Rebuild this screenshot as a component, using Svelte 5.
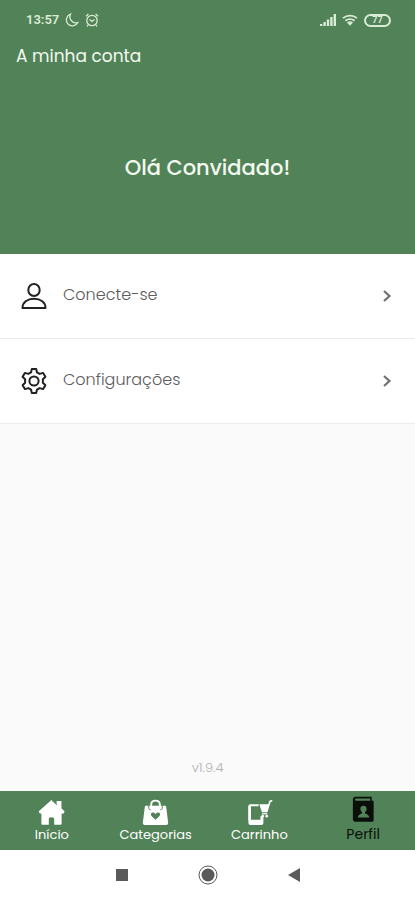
<script>
    const title = 'A minha conta';
    const version = 'v1.9.4';

    const menu = [
        { id: 'login', label: 'Conecte-se', href: '#login' },
        { id: 'settings', label: 'Configurações', href: '#settings' }
    ];

    const tabs = [
        { id: 'home', label: 'Início', href: '#home' },
        { id: 'categories', label: 'Categorias', href: '#categories' },
        { id: 'cart', label: 'Carrinho', href: '#cart' },
        { id: 'profile', label: 'Perfil', href: '#profile' }
    ];

    let active = $state('profile');
</script>

<div class="screen">
    <div class="status">
        <div class="status-group">
            <span class="clock">13:57</span>
            <svg class="status-icon" viewBox="0 0 14 14" aria-hidden="true">
                <path d="M5.5 1.2a6 6 0 1 0 7.3 8.3A6 6 0 0 1 5.5 1.2Z" />
            </svg>
            <svg class="status-icon" viewBox="0 0 14 14" aria-hidden="true">
                <circle cx="7" cy="7.5" r="5.2" />
                <path d="M1 3.2 3.4 1M13 3.2 10.6 1M4.5 6.5l2.500 2 2.500-2M3 12l-1 1.300M11 12l1 1.300" />
            </svg>
        </div>
        <div class="status-group right">
            <svg class="signal" viewBox="0 0 16 12" aria-hidden="true">
                <path d="M0 12v-2h2.400v2zM3.400 12V8h2.400v4zM6.800 12V5.500h2.400V12zM10.200 12V3h2.400v9zM13.600 12V0H16v12z" />
            </svg>
            <svg class="wifi" viewBox="0 0 16 12" aria-hidden="true">
                <path d="M1 4.200a10.500 10.500 0 0 1 14 0M3.400 6.800a7 7 0 0 1 9.200 0" />
                <path class="dot" d="M5 8.600a4.600 4.600 0 0 1 6 0L8 11.800Z" />
            </svg>
            <span class="battery">77</span>
        </div>
    </div>

    <header class="topbar">
        <h1>{title}</h1>
    </header>

    <section class="hero">
        <h2>Olá Convidado!</h2>
    </section>

    <main>
        <nav class="menu" aria-label={title}>
            {#each menu as item}
                <a class="menu-item" href={item.href}>
                    <svg class="menu-icon" viewBox="0 0 26 28" aria-hidden="true">
                        {#if item.id === 'login'}
                            <ellipse cx="13" cy="8" rx="5.7" ry="6" />
                            <path d="M1.500 26c0-5.600 4.700-9.200 11.500-9.200S24.500 20.400 24.500 26Z" />
                        {:else}
                            <path d="M10.800 2h4.400l.8 3.400 2.700 1.500 3.400-1 2.300 3.900-2.500 2.500v3.400l2.500 2.500-2.300 3.900-3.400-1-2.700 1.500-.8 3.400h-4.400l-.8-3.400-2.700-1.500-3.400 1-2.300-3.900 2.500-2.500v-3.400L1.600 9.800l2.300-3.900 3.400 1L10 5.400Z" />
                            <circle cx="13" cy="14" r="4.600" />
                        {/if}
                    </svg>
                    <span class="menu-label">{item.label}</span>
                    <svg class="chevron" viewBox="0 0 10 14" aria-hidden="true">
                        <path d="m2 2 5.500 5L2 12" />
                    </svg>
                </a>
            {/each}
        </nav>

        <p class="version">{version}</p>
    </main>

    <nav class="tabs" aria-label="Principal">
        {#each tabs as tab}
            <a
                class="tab"
                class:active={active === tab.id}
                href={tab.href}
                aria-current={active === tab.id ? 'page' : undefined}
                onclick={() => (active = tab.id)}
            >
                <svg viewBox="0 0 28 28" aria-hidden="true">
                    {#if tab.id === 'home'}
                        <path d="M14 1 .8 12.700l1 2.300H3.500v10.500c0 .8.500 1.300 1.300 1.300h6.400v-6c0-1.200.8-2 2.800-2s2.800.8 2.800 2v6h6.400c.8 0 1.300-.5 1.300-1.300V15h2.300l.7-2.300-3.200-3V2h-5v3.500l-2-2Z" />
                        <path class="cut" d="m14.500 1.500 5 4.500" />
                    {:else if tab.id === 'categories'}
                        <path fill-rule="evenodd" d="M4.500 7h19c.9 0 1.500.5 1.600 1.300l2 16c.2 1.500-.8 2.700-2.300 2.700H3.200C1.700 27 .7 25.800.9 24.300l2-16C3 7.500 3.600 7 4.500 7ZM14 21.500l4.200-3.900c1.200-1.300.4-3.500-1.500-3.500-1.200 0-2.100.6-2.700 1.700-.6-1.100-1.500-1.700-2.700-1.700-1.900 0-2.700 2.200-1.500 3.500Z" />
                        <path class="handle" d="M9.500 9V6c0-2.700 1.700-4.300 4.500-4.300s4.500 1.600 4.500 4.300v3" />
                        <path class="cut" d="M7 6.500v3c0 1 .8 1.700 2 1.700M21 6.500v3c0 1-.8 1.700-2 1.700" />
                    {:else if tab.id === 'cart'}
                        <path d="M5 5.500h8v2H5v14h10V18h3v7c0 1.200-.8 2-2 2H5c-1.500 0-2.500-1-2.500-2.500V8c0-1.500 1-2.500 2.500-2.500Z" />
                        <path d="M5 5.500c-1.500 0-2.500 1-2.500 2.500v14H5Z" />
                        <path d="M13.800 5.500H23l1.200-3.600 2.800-1 .5 1.500-1.900.8-3.400 10.500H16.500Z" />
                        <path d="M16.500 14.700H22V16h-5.500Z" />
                        <circle cx="17.300" cy="17.800" r="1.400" />
                        <circle cx="21.500" cy="17.800" r="1.400" />
                    {:else}
                        <path fill-rule="evenodd" d="M6 .8h16.500v4h2v20c0 1.200-.8 2-2 2H6c-1.700 0-3-1.300-3-3v-20c0-1.700 1.300-3 3-3ZM6 2.500c-1.100 0-1.100 2.300 0 2.300h15V2.500ZM14 10c-2 0-3.200 1.300-3.200 3.200 0 1.500.6 2.700 1.600 3.400v1.500c-2.500.7-4 1.800-4.400 4.200h12c-.4-2.400-1.900-3.500-4.400-4.200v-1.500c1-.7 1.600-1.900 1.600-3.400 0-1.900-1.200-3.200-3.200-3.200Z" />
                    {/if}
                </svg>
                <span>{tab.label}</span>
            </a>
        {/each}
    </nav>

    <div class="system">
        <button aria-label="Recentes">
            <svg viewBox="0 0 20 20" aria-hidden="true"><rect x="4" y="4" width="12" height="12" /></svg>
        </button>
        <button aria-label="Ecrã inicial">
            <svg viewBox="0 0 20 20" aria-hidden="true">
                <circle cx="10" cy="10" r="6.500" />
                <circle class="ring" cx="10" cy="10" r="9" />
            </svg>
        </button>
        <button aria-label="Voltar">
            <svg viewBox="0 0 20 20" aria-hidden="true"><path d="M4 10 16 3v14Z" /></svg>
        </button>
    </div>
</div>

<style>
    :global(body) {
        margin: 0;
        background: #fafafa;
    }

    .screen {
        --green: #528257;
        --light: #f3faf1;
        display: flex;
        flex-direction: column;
        min-height: 100vh;
        font-family: Poppins, Inter, "Open Sans", sans-serif;
        color: #5c5c5c;
    }

    svg {
        display: block;
        flex: none;
    }

    h1,
    h2,
    p {
        margin: 0;
    }

    a {
        color: inherit;
        text-decoration: none;
    }

    .status {
        display: flex;
        justify-content: space-between;
        align-items: center;
        height: 40px;
        padding: 0 24px 0 26px;
        background: var(--green);
        color: #d9ecd5;
    }

    .status-group {
        display: flex;
        align-items: center;
        gap: 6px;
    }

    .clock {
        font: 600 13px/16px Roboto, sans-serif;
    }

    .status-icon {
        width: 14px;
        height: 14px;
        fill: none;
        stroke: currentColor;
        stroke-width: 1.3;
    }

    .signal {
        width: 16px;
        height: 12px;
        fill: currentColor;
    }

    .wifi {
        width: 16px;
        height: 12px;
        fill: none;
        stroke: currentColor;
        stroke-width: 1.8;
    }

    .dot {
        fill: currentColor;
        stroke: none;
    }

    .battery {
        width: 23px;
        border: 2px solid currentColor;
        border-radius: 7px;
        font: 700 9px/9px Roboto, sans-serif;
        text-align: center;
    }

    .topbar {
        padding: 4px 16px 16px;
        background: var(--green);
        color: var(--light);
    }

    h1 {
        font-size: 17px;
        line-height: 24px;
        font-weight: 400;
    }

    .hero {
        padding: 68px 16px 70px;
        background: var(--green);
        color: var(--light);
        text-align: center;
    }

    h2 {
        font-size: 21px;
        line-height: 32px;
        font-weight: 500;
    }

    main {
        flex: 1;
        display: flex;
        flex-direction: column;
        justify-content: space-between;
        background: #fafafa;
    }

    .menu-item {
        display: flex;
        align-items: center;
        padding: 28px 23px 28px 21px;
        border-bottom: 1px solid #ebebeb;
        background: #fff;
    }

    .menu-icon {
        width: 26px;
        height: 28px;
        fill: none;
        stroke: #222;
        stroke-width: 2;
        stroke-linejoin: round;
    }

    .menu-label {
        flex: 1;
        padding: 0 16px 2px;
        font-size: 16px;
        line-height: 24px;
        font-weight: 300;
    }

    .chevron {
        width: 10px;
        height: 14px;
        fill: none;
        stroke: #707070;
        stroke-width: 2.2;
    }

    .version {
        padding-bottom: 14px;
        font-size: 13px;
        line-height: 18px;
        font-weight: 300;
        text-align: center;
        color: #b0b0b4;
    }

    .tabs {
        display: grid;
        grid-template-columns: repeat(4, 1fr);
        background: var(--green);
        color: #fff;
    }

    .tab {
        display: flex;
        flex-direction: column;
        align-items: center;
        padding: 8px 0 6px;
        font-size: 13px;
        line-height: 18px;
    }

    .tab svg {
        width: 27px;
        height: 27px;
        fill: currentColor;
    }

    .tab.active {
        padding: 5px 0;
        color: #0a0f0a;
        font-size: 14px;
        line-height: 22px;
    }

    .handle,
    .cut {
        fill: none;
        stroke: currentColor;
        stroke-width: 2;
    }

    .cut {
        stroke: var(--green);
        stroke-width: 1;
    }

    .system {
        display: flex;
        justify-content: center;
        gap: 66px;
        padding: 15px 0;
        background: #fff;
    }

    .system button {
        padding: 0;
        border: 0;
        background: none;
    }

    .system svg {
        width: 20px;
        height: 20px;
        fill: #5a5a5a;
    }

    .ring {
        fill: none;
        stroke: #5a5a5a;
        stroke-width: 1;
    }
</style>
